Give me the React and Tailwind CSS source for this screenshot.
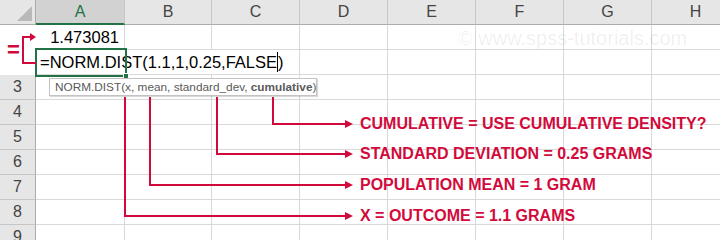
import React from 'react';

const RED = '#d20a3c';

const columns = ['A', 'B', 'C', 'D', 'E', 'F', 'G', 'H'];
const rows = [3, 4, 5, 6, 7, 8, 9];

const notes = [
    { y: 124, text: 'CUMULATIVE = USE CUMULATIVE DENSITY?' },
    { y: 154, text: 'STANDARD DEVIATION = 0.25 GRAMS' },
    { y: 185, text: 'POPULATION MEAN = 1 GRAM' },
    { y: 216, text: 'X = OUTCOME = 1.1 GRAMS' },
];

// vertical x where each arrow leaves the tooltip, and the row it turns at
const arrows = [
    { x: 273, y: 124 },
    { x: 217, y: 154 },
    { x: 150, y: 185 },
    { x: 125, y: 216 },
];

const Cell = ({ children, className = '' }) => (
    <div className={`border-r border-b border-[#d9d9d9] ${className}`}>{children}</div>
);

const App = () => {
    return (
        <div className="relative w-[720px] h-[240px] overflow-hidden bg-white font-['Liberation_Sans',Arial,sans-serif]">
            <div className="grid grid-cols-[36px_89px_87px_88px_88px_88px_88px_88px_88px] grid-rows-[25px_25px_25px_25px_25px_25px_25px_25px_25px_25px]">
                {/* header row */}
                <div className="relative bg-[#e6e6e6] border-r border-b border-[#ababab]">
                    <div className="absolute right-[3px] bottom-[3px] w-0 h-0 border-l-[15px] border-l-transparent border-b-[15px] border-b-[#b9b9b9]" />
                </div>
                {columns.map((c) => (
                    c === 'A' ? (
                        <div key={c} className="flex items-center justify-center bg-[#d2d2d2] border-r border-[#c6c6c6] border-b-2 border-b-[#217346] text-[16px] text-[#217346]">
                            {c}
                        </div>
                    ) : (
                        <div key={c} className="flex items-center justify-center bg-[#e6e6e6] border-r border-[#c6c6c6] border-b border-b-[#ababab] text-[16px] text-[#444]">
                            {c}
                        </div>
                    )
                ))}

                {/* row 1 */}
                <div className="bg-white" />
                <Cell className="flex items-center justify-end pr-[5px] text-[16.5px] text-black">1.473081</Cell>
                {columns.slice(1).map((c) => <Cell key={c} />)}

                {/* row 2: the formula runs over B and C */}
                <div className="bg-white" />
                <Cell className="col-span-3 pl-[4px] text-[16.5px] leading-[24px] text-black whitespace-nowrap">
                    =NORM.DIST(1.1,1,0.25,FALSE<span className="inline-block w-px h-[20px] align-[-4px] bg-black" />)
                </Cell>
                {columns.slice(3).map((c) => <Cell key={c} />)}

                {/* rows 3 - 9 */}
                {rows.map((r) => (
                    <React.Fragment key={r}>
                        <div className="flex items-center justify-center bg-[#e6e6e6] border-r border-[#ababab] border-b border-b-[#c6c6c6] text-[16px] text-[#444]">
                            {r}
                        </div>
                        {columns.map((c) => <Cell key={c} />)}
                    </React.Fragment>
                ))}
            </div>

            {/* watermark */}
            <div className="absolute left-[458px] top-[26px] text-[20px] leading-[24px] text-black/[0.07] whitespace-nowrap">
                © www.spss-tutorials.com
            </div>

            {/* active cell A2 */}
            <div className="absolute left-[35px] top-[48px] w-[92px] h-[29px] border-2 border-[#217346]" />
            <div className="absolute left-[123px] top-[73px] w-[6px] h-[6px] bg-[#217346] border border-white" />

            {/* function tooltip */}
            <div className="absolute left-[49px] top-[78px] w-[268px] h-[18px] pl-[5px] bg-white border border-[#c3c3c3] shadow-[1px_1px_1px_rgba(0,0,0,0.15)] text-[11.8px] leading-[16px] text-[#595959] whitespace-nowrap">
                NORM.DIST(x, mean, standard_dev, <span className="font-bold">cumulative</span>)
            </div>

            {/* "=" bracket in the row headers */}
            <div className="absolute left-[7px] top-[38px] text-[22px] leading-[24px] font-bold" style={{ color: RED }}>=</div>

            <svg className="absolute inset-0 pointer-events-none" width="720" height="240">
                <path d="M30 37 H23 V63 H36" fill="none" stroke={RED} strokeWidth="2" />
                <polygon points="30,33 36,37 30,41" fill={RED} />
                {arrows.map((a) => (
                    <g key={a.x}>
                        <path d={`M${a.x} 97 V${a.y} H346`} fill="none" stroke={RED} strokeWidth="2" />
                        <polygon points={`345,${a.y - 4} 353,${a.y} 345,${a.y + 4}`} fill={RED} />
                    </g>
                ))}
            </svg>

            {notes.map((n) => (
                <div
                    key={n.text}
                    className="absolute left-[360px] text-[16px] leading-[20px] font-bold whitespace-nowrap"
                    style={{ top: n.y - 10, color: RED }}
                >
                    {n.text}
                </div>
            ))}
        </div>
    );
};

export default App;
